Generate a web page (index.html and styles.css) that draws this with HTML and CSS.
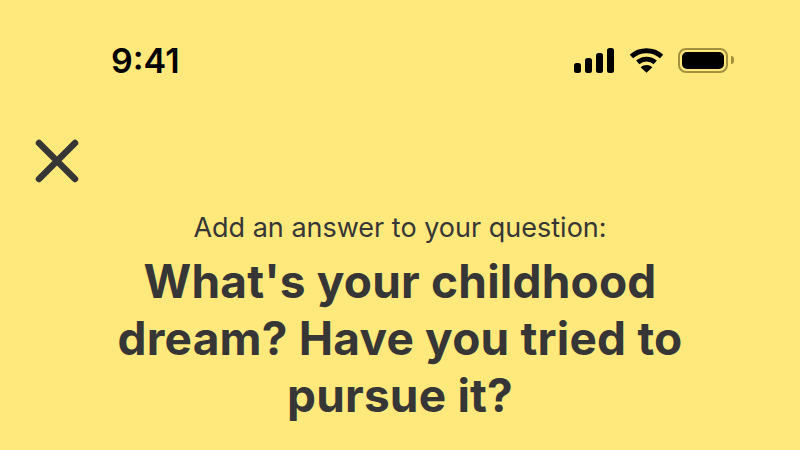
FILE: index.html
```html
<!DOCTYPE html>
<html lang="en">
<head>
	<meta charset="UTF-8">
	<title>Question</title>
	<link rel="stylesheet" href="styles.css">
</head>
<body>
	<div class="status">
		<span class="time">9:41</span>
		<div class="icons">
			<svg width="41" height="25" viewBox="0 0 41 25">
				<rect x="0" y="15" width="7" height="10" rx="2.500"/>
				<rect x="11" y="10" width="7" height="15" rx="2.500"/>
				<rect x="22" y="5" width="7" height="20" rx="2.500"/>
				<rect x="33" y="0" width="7" height="25" rx="2.500"/>
			</svg>
			<svg width="35" height="26" viewBox="0 0 36 26">
				<path d="M2.500 9.500C11 1.500 25 1.500 33.500 9.500" class="wave"/>
				<path d="M9 15.500C14 11 22 11 27 15.500" class="wave"/>
				<path d="M12 20.500C15.500 17.500 20.500 17.500 24 20.500L18 26Z"/>
			</svg>
			<div class="battery">
				<div class="shell"><div class="level"></div></div>
				<div class="nub"></div>
			</div>
		</div>
	</div>

	<svg class="close" width="44" height="44" viewBox="0 0 44 44">
		<path d="M4 4L40 40M40 4L4 40"/>
	</svg>

	<div class="content">
		<p class="hint">Add an answer to your question:</p>
		<h1>What's your childhood<br>dream? Have you tried to<br>pursue it?</h1>
	</div>
</body>
</html>
```
FILE: styles.css
```css
*{margin:0;padding:0;box-sizing:border-box;}
body{width:800px;height:450px;overflow:hidden;background:#ffe97d;font-family:'Inter','Liberation Sans',sans-serif;color:#363636;}
.status{display:flex;justify-content:space-between;align-items:center;height:44px;margin-top:38px;padding:0 66px 0 111px;}
.time{font-size:34px;font-weight:600;color:#000;}
.icons{display:flex;align-items:center;gap:14px;}
.icons svg{display:block;fill:#000;}
.wave{fill:none;stroke:#000;stroke-width:5;}
.battery{display:flex;align-items:center;gap:3px;}
.shell{width:50px;height:25px;padding:2px;border:2px solid #a3913f;border-radius:8px;}
.level{height:100%;background:#000;border-radius:5px;}
.nub{width:3px;height:8px;background:#a3913f;border-radius:0 3px 3px 0;}
.close{display:block;margin:57px 0 0 35px;fill:none;stroke:#363636;stroke-width:6.500;stroke-linecap:round;}
.content{margin-top:27px;text-align:center;}
.hint{font-size:27px;line-height:36px;}
h1{margin-top:7px;font-size:46px;line-height:57px;font-weight:700;letter-spacing:.2px;}
```
